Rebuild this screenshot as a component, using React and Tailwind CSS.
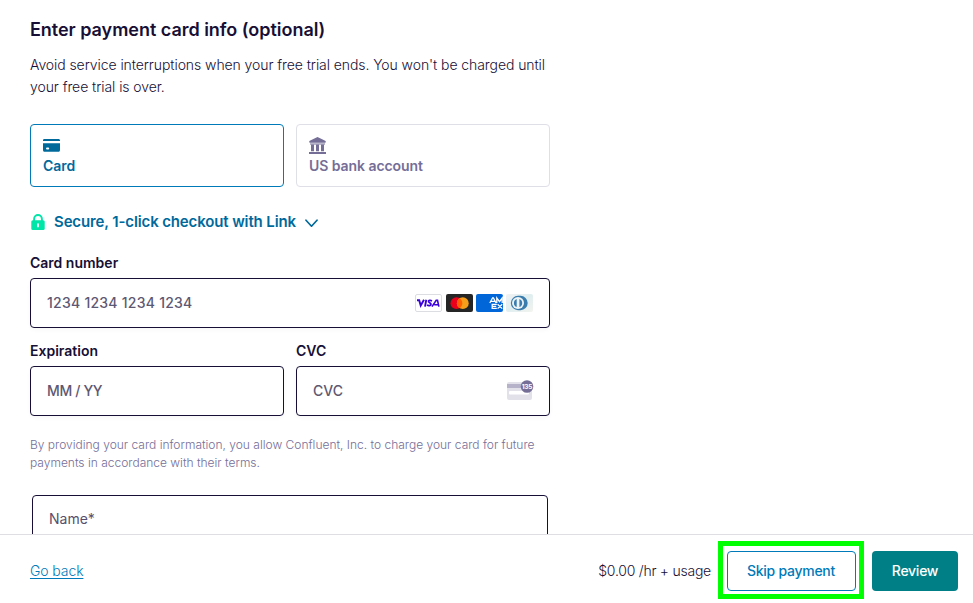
import React from "react";

function CardIcon() {
  return (
    <svg width="17" height="17" viewBox="0 0 17 17" className="block">
      <path d="M0 4V3.500C0 2.400.7 2 1.600 2h13.800c.9 0 1.600.5 1.600 1.500V4z" fill="#00699c" />
      <path d="M0 6.200h17v6.700c0 1.200-.8 1.900-1.900 1.900H1.900C.8 14.800 0 14.100 0 12.900z" fill="#00699c" />
      <rect x="3" y="10.500" width="3.200" height="2" rx="1" fill="#fff" />
    </svg>
  );
}

function BankIcon() {
  return (
    <svg width="17" height="17" viewBox="0 0 17 17" className="block" fill="#756e97">
      <path d="M8.500 0 16.200 3.800c1 .6.7 2-.4 2H1.200C.1 5.800-.2 4.400.8 3.800z" />
      <path d="M2 7.800h3v6.400H2zM7 7.800h3v6.400H7zM12 7.800h3v6.400h-3zM1 6.600h15v1H1zM0 15h17v2H0z" />
    </svg>
  );
}

function LockIcon() {
  return (
    <svg width="14" height="17" viewBox="0 0 14 17" className="block">
      <path d="M3.100 8V4.900a3.900 3.900 0 0 1 7.800 0V8" fill="none" stroke="#00e5a8" strokeWidth="1.900" />
      <rect x="0.300" y="6.200" width="13.400" height="9.900" rx="1.500" fill="#00e5a8" />
      <rect x="6.100" y="9.200" width="1.800" height="4.200" rx=".8" fill="#fff" />
    </svg>
  );
}

function Visa() {
  return (
    <svg width="27" height="18" viewBox="0 0 27 18">
      <rect x=".5" y=".5" width="26" height="17" rx="1.500" fill="#fff" stroke="#dcdce3" />
      <g fill="none" stroke="#3a00dc" strokeWidth="1.900">
        <path d="M2 6.200h2.200l1.500 5.300L9 5.700" />
        <path d="M11.300 5.700 10 12.600" />
        <path d="M17 6.900c-1.500-.8-3.500-.6-3.500.6 0 1.300 2.700 1.100 2.500 2.800-.2 1.600-2.600 1.600-4 .8" strokeWidth="1.700" />
        <path d="m17 12.600 4.200-6.200h1.300l1.400 6.200M19.200 10.700h4" strokeWidth="1.600" />
      </g>
    </svg>
  );
}

function Mastercard() {
  return (
    <svg width="27" height="18" viewBox="0 0 27 18">
      <rect width="27" height="18" rx="2" fill="#252525" />
      <circle cx="10.400" cy="9.200" r="5.900" fill="#eb001b" />
      <circle cx="16.800" cy="9.200" r="5.900" fill="#f79e1b" />
      <path d="M13.600 4.240a5.900 5.900 0 0 1 0 9.920 5.900 5.900 0 0 1 0-9.920" fill="#ff5f00" />
    </svg>
  );
}

function Amex() {
  return (
    <svg width="27" height="18" viewBox="0 0 27 18">
      <rect width="27" height="18" rx="2" fill="#0167d8" />
      <g fill="none" stroke="#fff" strokeWidth="1.300">
        <path d="m13.800 9 2.800-5.200h.8L20 9M15.200 7.400h3.600M20.800 9V4l2.700 3.600L26.200 4v5" />
        <path d="M20.800 10.400h-4.600v4h4.600M16.200 12.400h4M21.600 10.200l4.600 4.400M26.200 10.200l-4.600 4.400" />
      </g>
    </svg>
  );
}

function Diners() {
  return (
    <svg width="27" height="18" viewBox="0 0 27 18">
      <defs>
        <linearGradient id="diners-bg" x1="0" y1="0" x2="1" y2="1">
          <stop offset="0" stopColor="#f1f2f3" />
          <stop offset=".5" stopColor="#e0eef0" />
          <stop offset="1" stopColor="#f3f4ef" />
        </linearGradient>
      </defs>
      <rect width="27" height="18" rx="2" fill="url(#diners-bg)" />
      <path d="M12.500 1.800h2a7.200 7.200 0 0 1 0 14.400h-2z" fill="#3a7dae" />
      <circle cx="12" cy="9" r="7.200" fill="#3a7dae" />
      <circle cx="12" cy="9" r="6" fill="#eef3f5" />
      <path d="M10.700 4.900a4.400 4.400 0 0 0 0 8.200zM13.400 4.900a4.400 4.400 0 0 1 0 8.200z" fill="#3a7dae" />
    </svg>
  );
}

function CvcIcon() {
  return (
    <svg width="27" height="20" viewBox="0 0 27 20" className="-mr-px mb-[2px] block">
      <rect y="2" width="25" height="18" rx="2" fill="#e2e1e9" />
      <rect y="4" width="25" height="4" fill="#b5b2c9" />
      <rect x="2" y="11" width="20" height="3.500" rx="1" fill="#fff" />
      <circle cx="20" cy="6.500" r="6.300" fill="#756e97" />
      <text x="20" y="9" textAnchor="middle" fontSize="6.500" fontWeight="700" letterSpacing="-.3" fill="#fff">
        135
      </text>
    </svg>
  );
}

function Field({ label, text, children }) {
  return (
    <div className="flex flex-col">
      <label className="h-[15px] text-[14px] leading-[15px] font-semibold text-[#170f35]">{label}</label>
      <div className="mt-2 flex h-[50px] items-center justify-between rounded-[4px] border border-[#170f35] bg-white px-4 shadow-[0_2px_4px_rgba(23,15,53,0.03)]">
        <span className="text-[14px] leading-5 font-medium text-[#5d5872]">{text}</span>
        {children}
      </div>
    </div>
  );
}

export default function App() {
  return (
    <div className="flex h-[603px] w-[973px] flex-col overflow-hidden bg-white font-['Inter',sans-serif] whitespace-nowrap text-[#170f35]">
      <main className="h-[534px] shrink-0 overflow-hidden pl-[30px]">
        <div className="flex w-[520px] flex-col">
          <h1 className="mt-[18px] text-[18px] leading-6 font-semibold tracking-[-0.03px]">Enter payment card info (optional)</h1>
          <p className="mt-3 text-[14px] leading-[22px] font-light tracking-[-0.075px] text-[#170f35]">
            Avoid service interruptions when your free trial ends. You won't be charged until
            <br />
            your free trial is over.
          </p>

          <div className="mt-[26px] grid grid-cols-2 gap-3">
            <div className="flex h-[63px] flex-col rounded-[4px] border border-[#007ab8] px-3 pt-3">
              <CardIcon />
              <span className="mt-1 text-[14px] leading-4 font-semibold text-[#00699c]">Card</span>
            </div>
            <div className="flex h-[63px] flex-col rounded-[4px] border border-[#dfdfe7] px-3 pt-3">
              <BankIcon />
              <span className="mt-1 text-[14px] leading-4 font-semibold tracking-[-0.06px] text-[#756e97]">US bank account</span>
            </div>
          </div>

          <div className="mt-[25px] flex h-5 items-center text-[#00699c]">
            <span className="ml-px">
              <LockIcon />
            </span>
            <span className="ml-[9px] text-[15px] leading-5 font-semibold tracking-[-0.13px]">Secure, 1-click checkout with Link</span>
            <svg width="13" height="9" viewBox="0 0 13 9" className="mt-[3px] ml-[9px]" fill="none" stroke="currentColor" strokeWidth="1.700" strokeLinecap="round" strokeLinejoin="round">
              <path d="m1 1.200 5.500 6L12 1.200" />
            </svg>
          </div>

          <div className="mt-[23px]">
            <Field label="Card number" text={<span className="tracking-[0.25px]">1234 1234 1234 1234</span>}>
              <div className="grid grid-cols-[31px_30px_30px_27px]">
                <Visa />
                <Mastercard />
                <Amex />
                <Diners />
              </div>
            </Field>
          </div>
          <div className="mt-[15px] grid grid-cols-2 gap-3">
            <Field label="Expiration" text={<span className="tracking-[-0.35px]">MM / YY</span>} />
            <Field label="CVC" text="CVC">
              <CvcIcon />
            </Field>
          </div>

          <p className="mt-5 text-[12px] leading-[18px] font-light text-[#756e97]">
            By providing your card information, you allow Confluent, Inc. to charge your card for future
            <br />
            payments in accordance with their terms.
          </p>

          <div className="mx-[2px] mt-[23px] h-[50px] rounded-[4px] border border-[#170f35] px-4 pt-[13px]">
            <span className="block text-[14px] leading-5 text-[#56506d]">Name*</span>
          </div>
        </div>
      </main>

      <footer className="flex h-[69px] shrink-0 items-center border-t border-[#dfdfe3] pr-[15px] pl-[30px]">
        <a className="mt-[3px] text-[14px] leading-5 font-light tracking-[-0.1px] text-[#007ab8] underline underline-offset-2">Go back</a>
        <div className="mt-[2px] ml-auto flex items-center">
          <span className="mt-[2px] text-[14px] leading-5 font-light tracking-[-0.24px]">$0.00 /hr + usage</span>
          <div className="ml-[7px] flex h-[58px] w-[146px] items-center justify-center border-[5px] border-[#00ff00]">
            <button className="mt-[2px] h-10 w-[129px] rounded-[4px] border border-[#007ab8] text-[14px] leading-5 font-medium tracking-[-0.26px] text-[#007ab8]">
              Skip payment
            </button>
          </div>
          <button className="mt-[2px] ml-2 h-10 w-[86px] rounded-[4px] bg-[#007f86] text-[14px] leading-5 font-medium tracking-[-0.26px] text-white">Review</button>
        </div>
      </footer>
    </div>
  );
}
